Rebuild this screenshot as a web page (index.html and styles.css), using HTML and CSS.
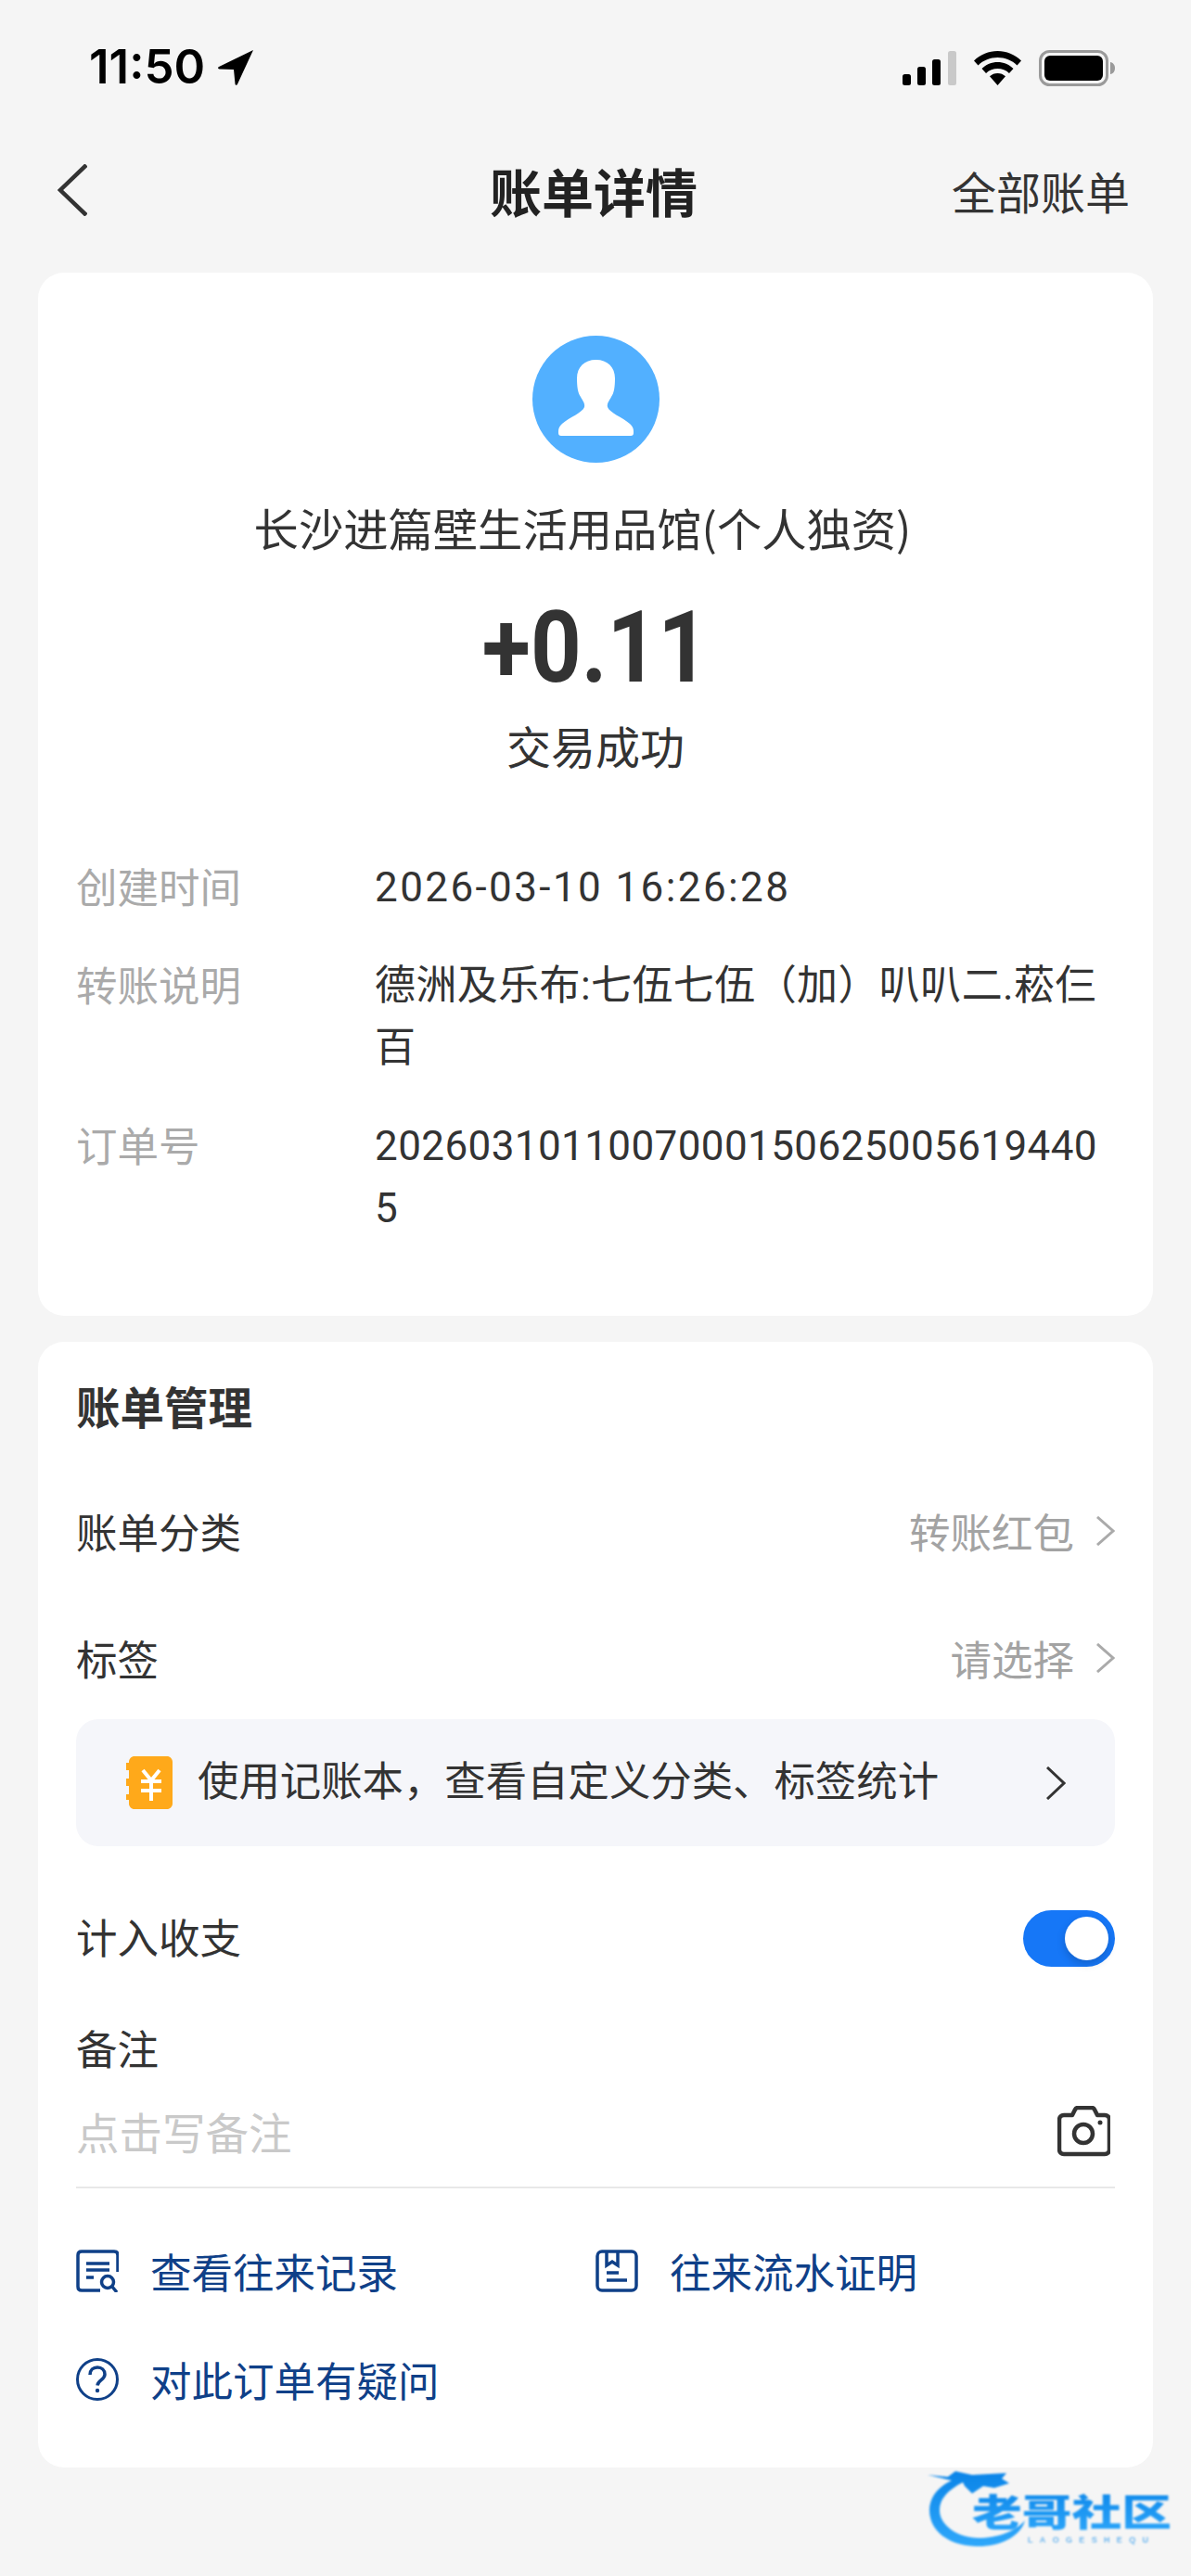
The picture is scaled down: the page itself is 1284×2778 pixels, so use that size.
FILE: index.html
```html
<!DOCTYPE html>
<html lang="zh-CN">
<head>
<meta charset="utf-8">
<title>账单详情</title>
<link rel="stylesheet" href="styles.css">
</head>
<body>
<div class="screen">
  <div class="statusbar">
    <div class="status-left">
      <span class="time">11:50</span>
      <svg class="loc" viewBox="0 0 39 39"><path d="M38 1 1 19c-1.500.8-1 2.500.5 2.500L17 22l1.500 15.500c.1 1.500 2 1.800 2.500.3Z"/></svg>
    </div>
    <div class="status-right">
      <svg class="signal" viewBox="0 0 58 37"><rect x="0" y="25" width="9" height="12" rx="2.500"/><rect x="16" y="17" width="9" height="20" rx="2.500"/><rect x="32" y="9" width="9" height="28" rx="2.500"/><rect class="dim" x="49" y="0" width="9" height="37" rx="2.500"/></svg>
      <svg class="wifi" viewBox="0 0 51 37"><path d="M25.500 0C35 0 44 3.800 51 10.500l-4.500 5C41 10 33.500 7 25.500 7S10 10 4.500 15.500L0 10.500C7 3.800 16 0 25.500 0Z"/><path d="M25.500 12c6.300 0 12.500 2.500 17 7l-4.500 5c-3.300-3.200-7.800-5-12.500-5s-9.200 1.800-12.500 5l-4.500-5c4.500-4.500 10.700-7 17-7Z"/><path d="M25.500 24c3.200 0 6.200 1.200 8.500 3.300L25.500 37 17 27.300c2.300-2.100 5.300-3.300 8.500-3.300Z"/></svg>
      <svg class="battery" viewBox="0 0 82 39"><rect x="1.500" y="1.500" width="72" height="36" rx="10" fill="none" stroke="#9a9a9a" stroke-width="3"/><rect x="6" y="6" width="63" height="27" rx="6"/><path class="dim2" d="M77 13c3 .5 5 3 5 6.500s-2 6-5 6.500Z"/></svg>
    </div>
  </div>

  <div class="nav">
    <svg class="back" viewBox="0 0 32 56"><path d="M31 1 3 28l28 27"/></svg>
    <h1 class="nav-title">账单详情</h1>
    <span class="nav-link">全部账单</span>
  </div>

  <section class="card summary">
    <div class="summary-head">
      <svg class="avatar" viewBox="0 0 137 137"><circle cx="68.500" cy="68.500" r="68.500" fill="#52b0ff"/><path fill="#fff" d="M68.500 26C56 26 48 34 48 46c0 9 1 16 4 20 2 4 5 7 4 11-2 6-16 11-24 18-3 3-4 5-4 8v2c0 2 1 3 3 3h75c2 0 3-1 3-3v-2c0-3-1-5-4-8-8-7-22-12-24-18-1-4 2-7 4-11 3-4 4-11 4-20 0-12-8-20-20.500-20Z"/></svg>
      <div class="merchant">长沙进篇壁生活用品馆(个人独资)</div>
      <div class="amount">+0.11</div>
      <div class="state">交易成功</div>
    </div>
    <dl class="details">
      <dt>创建时间</dt><dd class="date">2026-03-10 16:26:28</dd>
      <dt>转账说明</dt><dd>德洲及乐布:七伍七伍（加）叭叭二.菘仨百</dd>
      <dt>订单号</dt><dd>20260310110070001506250056194405</dd>
    </dl>
  </section>

  <section class="card manage">
    <h2 class="manage-title">账单管理</h2>
    <div class="row row-category">
      <span>账单分类</span>
      <span class="row-value">转账红包<svg class="chev" viewBox="0 0 20 32"><path d="M1 1l17 15L1 31"/></svg></span>
    </div>
    <div class="row row-tag">
      <span>标签</span>
      <span class="row-value">请选择<svg class="chev" viewBox="0 0 20 32"><path d="M1 1l17 15L1 31"/></svg></span>
    </div>
    <div class="banner">
      <svg class="book" viewBox="0 0 50 57"><path fill="#ffa91a" d="M9 0h35c3.300 0 6 2.700 6 6v45c0 3.300-2.700 6-6 6H9c-3.300 0-6-2.700-6-6v-4H0v-6h3v-9H0v-8h3v-9H0v-8h3V6c0-3.300 2.700-6 6-6Z"/><path fill="none" stroke="#fff" stroke-width="4" d="M18 15l9 11 9-11M16 27h22M16 37h22M27 26v22"/></svg>
      <span class="banner-text">使用记账本，查看自定义分类、标签统计</span>
      <svg class="chev-dark" viewBox="0 0 21 36"><path d="M1 1l18 17L1 35"/></svg>
    </div>
    <div class="row row-switch">
      <span class="switch-label">计入收支</span>
      <span class="switch"><span class="knob"></span></span>
    </div>
    <div class="note-label">备注</div>
    <div class="note-input">
      <span class="placeholder">点击写备注</span>
      <svg class="camera" viewBox="0 0 57 55"><path fill="none" stroke="#333" stroke-width="4.500" stroke-linejoin="round" d="M7 10h9l3-6c.5-1 1.500-2 3-2h15c1.500 0 2.500 1 3 2l3 6h8c3 0 5 2 5 5v32c0 3-2 5-5 5H7c-3 0-5-2-5-5V15c0-3 2-5 5-5Z"/><circle cx="28" cy="30" r="10" fill="none" stroke="#333" stroke-width="4.500"/><circle cx="46" cy="18" r="2.500" fill="#333"/></svg>
    </div>
    <div class="links">
      <a class="link">
        <svg class="link-icon" viewBox="0 0 46 46"><g fill="none" stroke="#0f4088" stroke-width="3.500"><path d="M45 24V6c0-2.500-1.500-4-4-4H6C3.500 2 2 3.500 2 6v34c0 2.500 1.500 4 4 4h20"/><path d="M11 15h25M11 22h25M11 30h8"/><circle cx="34" cy="35" r="6.500"/><path d="M39 40l5 6"/></g></svg>
        查看往来记录
      </a>
      <a class="link">
        <svg class="link-icon" viewBox="0 0 46 46"><g fill="none" stroke="#0f4088" stroke-width="3.500"><rect x="2" y="2" width="42" height="42" rx="5"/><path d="M12 3v14l6-4 6 4V3"/><path d="M12 25h13M12 33h22"/></g></svg>
        往来流水证明
      </a>
      <a class="link link-wide">
        <svg class="link-icon" viewBox="0 0 46 46"><g fill="none" stroke="#0f4088" stroke-width="3"><circle cx="23" cy="23" r="21.500"/><path stroke-width="3.500" d="M15 18c0-5 3.500-8 8-8s8 3 8 7.500c0 6-7.500 6-8 12"/></g><circle cx="23" cy="35" r="2.200" fill="#0f4088"/></svg>
        对此订单有疑问
      </a>
    </div>
  </section>

  <svg class="watermark" viewBox="0 0 284 121">
    <defs>
      <linearGradient id="wm" x1="0" y1="0" x2="0" y2="1"><stop offset="0" stop-color="#0a84e8"/><stop offset="1" stop-color="#2fa8fb"/></linearGradient>
    </defs>
    <path fill="url(#wm)" d="M0 24l22 2 8-6 18 4 37-2-5 6 8 5-16 5-12-2-12 8-8-8-2-4C22 40 13 50 13 62c0 16 19 30 42 30 20 0 40-7 50-19-5 19-30 29-53 28C22 100 2 84 2 62 2 48 12 36 26 30Z"/>
    <text class="wm-cn" x="48" y="79" textLength="215" lengthAdjust="spacingAndGlyphs" fill="url(#wm)">老哥社区</text>
    <text class="wm-en" x="108" y="97" textLength="130" fill="#6db6ef">LAOGESHEQU</text>
  </svg>
</div>
</body>
</html>
```
FILE: styles.css
```css
* { box-sizing: border-box; }
html, body { margin: 0; padding: 0; }
body {
  background: #f5f5f5;
  font-family: "Noto Sans CJK SC", sans-serif;
  color: #333;
}
.screen { position: relative; width: 1284px; height: 2778px; overflow: hidden; }

.statusbar {
  height: 133px;
  padding: 53px 82px 0 96px;
  display: flex;
  justify-content: space-between;
  align-items: flex-start;
}
.status-left { display: flex; align-items: center; gap: 14px; height: 38px; }
.time { font: 600 51px/38px Inter, sans-serif; color: #000; }
.loc { width: 39px; height: 39px; fill: #000; flex: none; }
.status-right { display: flex; align-items: center; height: 40px; }
.signal { width: 58px; height: 37px; fill: #000; }
.wifi { width: 51px; height: 37px; margin-left: 19px; fill: #000; }
.battery { width: 82px; height: 39px; margin-left: 19px; fill: #000; }
.dim { fill: #c9c9c9; }
.dim2 { fill: #9a9a9a; }

.nav {
  height: 161px;
  padding: 0 66px 18px 62px;
  display: grid;
  grid-template-columns: 1fr auto 1fr;
  align-items: center;
}
.back { width: 32px; height: 56px; fill: none; stroke: #333; stroke-width: 4.500; }
.nav-title { margin: 0; font-size: 56px; font-weight: 700; color: #222; line-height: 1; }
.nav-link { justify-self: end; font-size: 48px; line-height: 1; color: #333; }

.card { margin: 0 41px; background: #fff; border-radius: 28px; padding: 0 41px; }
.summary { height: 1125px; margin-bottom: 28px; }
.summary-head { display: flex; flex-direction: column; align-items: center; padding-top: 68px; }
.avatar { width: 137px; height: 137px; display: block; }
.merchant { margin-top: 39px; padding-right: 28px; font-size: 48.300px; line-height: 60px; }
.amount { margin-top: 40px; font: 700 108px/120px "Roboto", sans-serif; transform: scaleX(.885); }
.state { margin-top: 15px; font-size: 48px; line-height: 60px; }

.details {
  margin: 91px 0 0;
  display: grid;
  grid-template-columns: 322px 1fr;
  row-gap: 39px;
  font-size: 44.500px;
  line-height: 67px;
}
.details dt { color: #aaa; line-height: 61px; }
.details dd { margin: 0; color: #333; font-family: Roboto, "Noto Sans CJK SC", sans-serif; font-size: 44px; letter-spacing: .4px; word-break: break-all; }
.details .date { letter-spacing: 2.400px; }

.manage { height: 1214px; }
.manage-title { margin: 0; padding-top: 39px; font-size: 47.500px; line-height: 60px; font-weight: 700; }
.row { display: flex; justify-content: space-between; align-items: center; font-size: 44.500px; line-height: 60px; }
.row-category { margin-top: 75px; }
.row-tag { margin-top: 77px; }
.row-value { display: flex; align-items: center; color: #a3a3a3; }
.chev { width: 20px; height: 32px; margin-left: 24px; fill: none; stroke: #aaa; stroke-width: 3; }

.banner {
  margin-top: 36px;
  height: 137px;
  background: #f5f6fa;
  border-radius: 24px;
  display: flex;
  align-items: center;
  padding: 0 53px 0 54px;
  font-size: 44.400px;
}
.book { width: 50px; height: 57px; flex: none; }
.banner-text { margin: 0 0 10px 27px; flex: 1; }
.chev-dark { width: 21px; height: 36px; fill: none; stroke: #333; stroke-width: 3; }

.row-switch { margin-top: 67px; }
.switch-label { margin-bottom: 4px; }
.switch { position: relative; width: 99px; height: 61px; border-radius: 31px; background: #1677f7; display: block; }
.knob {
  position: absolute; right: 7px; top: 7px;
  width: 47px; height: 47px; border-radius: 50%;
  background: #fff;
  box-shadow: 0 4px 10px rgba(0,0,0,.18);
}
.note-label { margin-top: 56px; font-size: 44.500px; line-height: 60px; }
.note-input {
  margin-top: 29px;
  height: 62px;
  display: flex; justify-content: space-between; align-items: center;
  font-size: 46.500px;
  color: #c9c9c9;
  padding-right: 5px;
}
.placeholder { line-height: 60px; }
.camera { width: 57px; height: 55px; }
.links {
  margin-top: 29px;
  padding-top: 59px;
  border-top: 2px solid #e8e8e8;
  display: grid;
  grid-template-columns: 560px 1fr;
  row-gap: 57px;
}
.link { display: flex; align-items: center; gap: 34px; font-size: 44.500px; line-height: 60px; color: #0f4088; }
.link-wide { grid-column: 1 / 3; }
.link-icon { width: 46px; height: 46px; flex: none; }

.watermark { position: absolute; left: 1000px; top: 2645px; width: 284px; height: 121px; filter: blur(1px); }
.wm-cn { font-size: 40px; font-weight: 900; }
.wm-en { font: 700 9px "Liberation Sans", sans-serif; }
```
